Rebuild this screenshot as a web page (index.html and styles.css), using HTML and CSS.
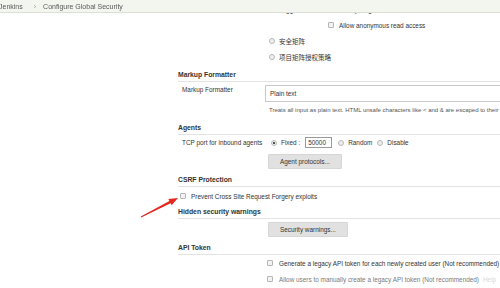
FILE: index.html
```html
<!DOCTYPE html>
<html lang="en">
<head>
    <meta charset="UTF-8">
    <meta name="viewport" content="width=device-width, initial-scale=1.0">
    <title>Configure Global Security [Jenkins]</title>
    <link rel="stylesheet" href="styles.css">
</head>
<body>
    <div class="breadcrumbs">
        <span class="crumb">Jenkins</span>
        <span class="sep">›</span>
        <span class="crumb">Configure Global Security</span>
    </div>

    <div class="main">
        <!-- Authorization strategy (scrolled, top row sits under the bar) -->
        <div class="strategy">
            <div class="opt"><span class="radio"></span>Logged-in users can do anything</div>
            <div class="opt nested"><span class="check"></span>Allow anonymous read access</div>
            <div class="opt cjk"><span class="radio"></span>安全矩阵</div>
            <div class="opt cjk"><span class="radio"></span>项目矩阵授权策略</div>
        </div>

        <div class="section-title">Markup Formatter</div>
        <div class="row">
            <div class="label">Markup Formatter</div>
            <div class="field">
                <div class="select">Plain text</div>
                <div class="desc">Treats all input as plain text. HTML unsafe characters like &lt; and &amp; are escaped to their respective character entities.</div>
            </div>
        </div>

        <div class="section-title gap">Agents</div>
        <div class="row">
            <div class="label">TCP port for inbound agents</div>
            <div class="field port">
                <span class="radio checked"></span><span class="port-text">Fixed :</span>
                <span class="port-input">50000</span>
                <span class="radio"></span><span class="port-text">Random</span>
                <span class="radio"></span><span class="port-text">Disable</span>
            </div>
        </div>
        <div class="row btn-row">
            <div></div>
            <div class="field"><button class="btn">Agent protocols...</button></div>
        </div>

        <div class="section-title gap">CSRF Protection</div>
        <div class="csrf"><span class="check"></span>Prevent Cross Site Request Forgery exploits</div>

        <div class="section-title">Hidden security warnings</div>
        <div class="row btn-row tight">
            <div></div>
            <div class="field"><button class="btn">Security warnings...</button></div>
        </div>

        <div class="section-title gap">API Token</div>
        <div class="row api">
            <div></div>
            <div class="field"><span class="check"></span>Generate a legacy API token for each newly created user (Not recommended)</div>
        </div>
        <div class="row api muted">
            <div></div>
            <div class="field"><span class="check"></span>Allow users to manually create a legacy API token (Not recommended)<span class="faded">Help</span></div>
        </div>
    </div>

    <svg class="arrow" width="500" height="288" viewBox="0 0 500 288">
        <polygon points="140.8,216.6 169.4,200.9 168.4,199.0 178,198 171.6,205.2 170.6,203.3 141.2,217.4" fill="#e5281f"/>
    </svg>
</body>
</html>
```

FILE: styles.css
```css
body {
    font-family: "Liberation Sans", Arial, "Noto Sans CJK SC", sans-serif;
    font-size: 6.4px;
    margin: 0;
    padding: 0;
    color: #333;
    background: #fff;
    width: 500px;
    height: 288px;
    overflow: hidden;
    position: relative;
}
.breadcrumbs {
    position: fixed;
    top: 0;
    left: 0;
    right: 0;
    height: 12px;
    background: #f3f5ef;
    border-bottom: 1px solid #dcdfd6;
    display: flex;
    align-items: center;
    color: #5a5a5a;
    font-size: 7px;
    z-index: 2;
}
.crumb:first-child {
    margin-left: -1px;
}
.sep {
    margin: 0 7px 0 11px;
    color: #999;
}
.main {
    margin-left: 178px;
    width: 420px;
    padding-top: 1px;
    white-space: nowrap;
}
.strategy {
    margin-left: 91px;
}
.opt {
    display: flex;
    align-items: center;
    height: 16px;
}
.opt.nested {
    margin-left: 59px;
}
.opt.cjk {
    font-family: "Noto Sans CJK SC", sans-serif;
    font-size: 6.5px;
}
.radio {
    display: inline-block;
    width: 4px;
    height: 4px;
    border: 1px solid #b8b8b8;
    border-radius: 50%;
    background: #eee;
    margin-right: 4px;
    flex-shrink: 0;
}
.radio.checked {
    background: radial-gradient(circle, #555 0 1px, #eee 1.4px);
}
.check {
    display: inline-block;
    width: 4px;
    height: 4px;
    border: 1px solid #b5b5b5;
    border-radius: 1px;
    background: #f2f2f2;
    margin-right: 5px;
    flex-shrink: 0;
}
.section-title {
    height: 12px;
    line-height: 12px;
    font-size: 6.8px;
    font-weight: bold;
    border-bottom: 1px solid #e3e3e3;
    margin-top: 4px;
}
.section-title.gap {
    margin-top: 5px;
}
.row {
    display: grid;
    grid-template-columns: 87px 1fr;
}
.label {
    padding-left: 4px;
    padding-top: 3px;
    line-height: 9px;
}
.field {
    padding-top: 3px;
}
.select {
    height: 15px;
    line-height: 15px;
    border: 1px solid #c9c9c9;
    padding-left: 4px;
    width: 260px;
    background: #fff;
}
.desc {
    padding: 4px 0 2px 4px;
    line-height: 9px;
    font-size: 6px;
    color: #555;
}
.field.port {
    display: flex;
    align-items: center;
    padding-top: 2px;
    padding-left: 6px;
    height: 11px;
}
.port-text {
    margin-right: 5px;
}
.port-input {
    width: 23px;
    height: 9px;
    line-height: 9px;
    border: 1px solid #9a9a9a;
    padding-left: 2px;
    margin-right: 6px;
}
.btn-row .field {
    padding-top: 6px;
    padding-left: 3px;
}
.btn-row.tight .field {
    padding-top: 3px;
}
.btn {
    display: block;
    font-family: inherit;
    font-size: 6.4px;
    color: #333;
    height: 15px;
    padding: 0 11px;
    border: 1px solid #d6d6d6;
    border-radius: 1px;
    background: #e1e1e1;
}
.csrf {
    display: flex;
    align-items: center;
    height: 12px;
    padding-top: 3px;
    padding-left: 2px;
}
.api .field {
    display: flex;
    align-items: center;
    height: 16px;
    padding: 0 0 0 2px;
}
.api .check {
    margin-right: 6px;
}
.api.muted .field {
    color: #7a7a7a;
}
.faded {
    margin-left: 4px;
    color: #d8d8d8;
}
.arrow {
    position: absolute;
    top: 0;
    left: 0;
    pointer-events: none;
}
```
